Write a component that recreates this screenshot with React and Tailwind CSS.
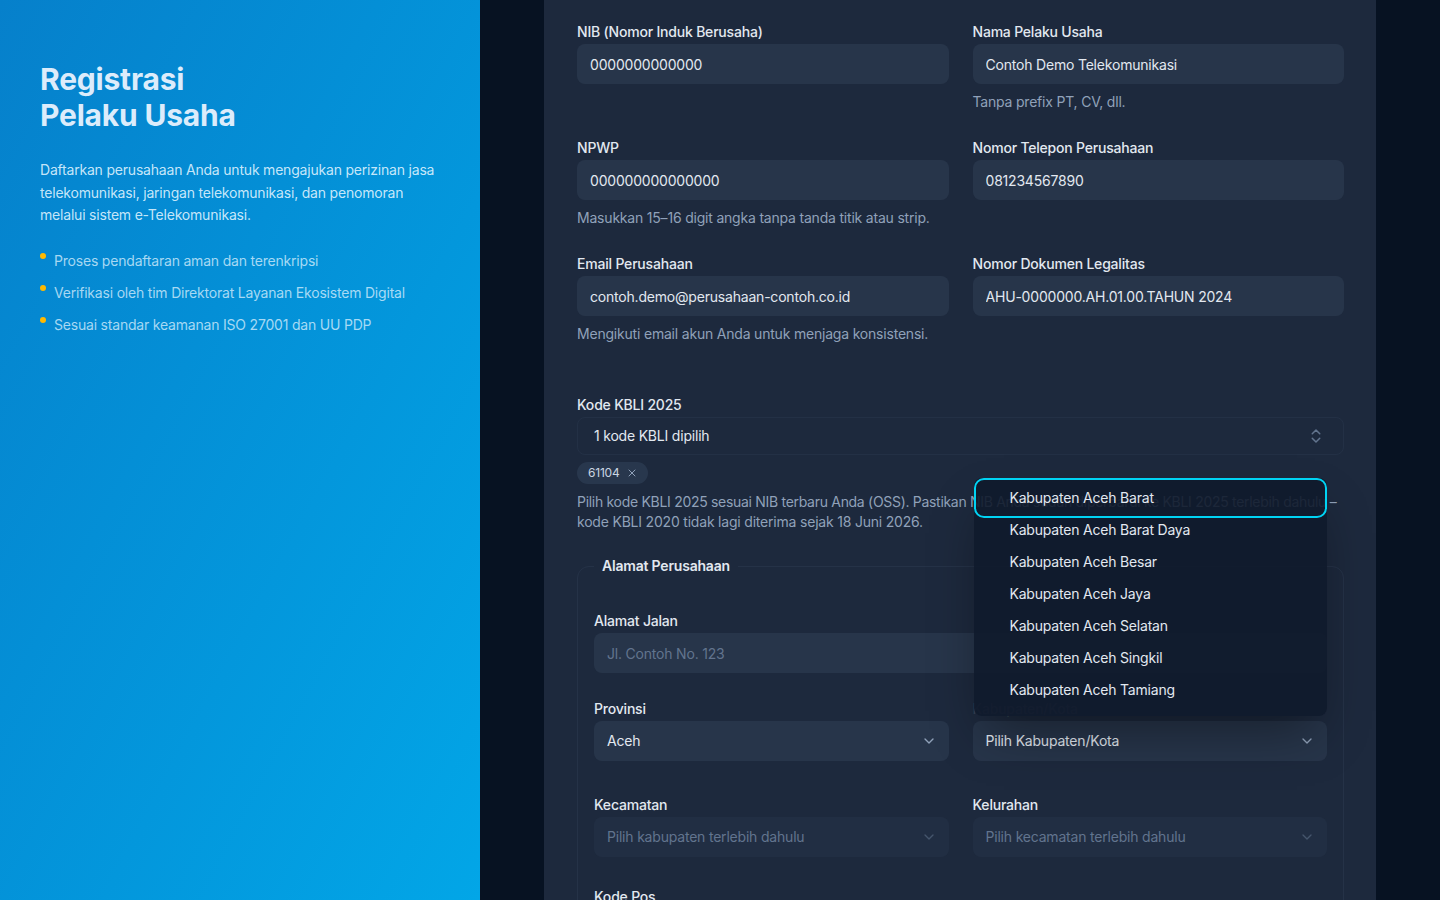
import { ChevronDown, ChevronsUpDown, X } from "lucide-react";

const KABUPATEN = [
  "Kabupaten Aceh Barat",
  "Kabupaten Aceh Barat Daya",
  "Kabupaten Aceh Besar",
  "Kabupaten Aceh Jaya",
  "Kabupaten Aceh Selatan",
  "Kabupaten Aceh Singkil",
  "Kabupaten Aceh Tamiang",
];

function Label({ children }) {
  return (
    <label className="block mb-0.5 text-sm leading-5 font-medium text-slate-200">
      {children}
    </label>
  );
}

function Help({ children }) {
  return <p className="mt-2 text-sm leading-5 text-slate-400">{children}</p>;
}

function Field({ label, value, placeholder, help }) {
  return (
    <div>
      <Label>{label}</Label>
      <input
        readOnly
        defaultValue={value}
        placeholder={placeholder}
        className="block w-full h-10 rounded-lg bg-slate-700/50 px-[13px] text-sm tracking-[-0.2px] text-slate-200 placeholder:text-slate-500 outline-none"
      />
      {help && <Help>{help}</Help>}
    </div>
  );
}

function Select({ label, value, disabled, children }) {
  return (
    <div>
      <Label>
        <span className={children ? "text-slate-200/15" : ""}>{label}</span>
      </Label>
      <div className="relative">
        {children}
        <div
          className={`flex h-10 items-center justify-between rounded-lg pl-[13px] pr-3 text-sm ${
            disabled
              ? "bg-slate-700/25 text-slate-500"
              : "bg-slate-700/50 text-slate-200"
          }`}
        >
          <span>{value}</span>
          <ChevronDown
            size={16}
            className={disabled ? "text-slate-600" : "text-slate-400"}
          />
        </div>
      </div>
    </div>
  );
}

function KabupatenList() {
  return (
    <div className="absolute left-px right-0 bottom-[calc(100%+5px)] z-10 h-[238px] overflow-hidden rounded-lg bg-[#0f1a2b]/90 pt-1 shadow-2xl shadow-black/40">
      {KABUPATEN.map((k, i) => (
        <div
          key={k}
          className={`mx-1 flex h-8 items-center rounded-md pl-8 text-sm text-slate-200 ${
            i === 0
              ? "outline-2 outline-offset-2 outline-cyan-400 rounded-lg"
              : ""
          }`}
        >
          {k}
        </div>
      ))}
    </div>
  );
}

export default function App() {
  return (
    <div className="flex h-screen overflow-hidden font-['Inter',sans-serif] tracking-[-0.2px]">
      {/* Left hero */}
      <aside className="w-[480px] shrink-0 bg-linear-to-br from-[#0680cb] to-[#02a6e7] px-10 pt-[61px]">
        <h1 className="text-3xl leading-9 font-bold text-[#dcecfb]">
          Registrasi
          <br />
          Pelaku Usaha
        </h1>
        <p className="mt-[26px] max-w-[400px] text-sm leading-[22.5px] text-sky-100/90">
          Daftarkan perusahaan Anda untuk mengajukan perizinan jasa
          telekomunikasi, jaringan telekomunikasi, dan penomoran melalui sistem
          e-Telekomunikasi.
        </p>
        <ul className="mt-6 flex flex-col gap-3">
          {[
            "Proses pendaftaran aman dan terenkripsi",
            "Verifikasi oleh tim Direktorat Layanan Ekosistem Digital",
            "Sesuai standar keamanan ISO 27001 dan UU PDP",
          ].map((t) => (
            <li key={t} className="flex items-start gap-2 text-sm leading-5 text-sky-100/75">
              <span className="mt-[2px] h-1.5 w-1.5 shrink-0 rounded-full bg-amber-400" />
              {t}
            </li>
          ))}
        </ul>
      </aside>

      {/* Form area */}
      <main className="flex-1 bg-[#071222] overflow-hidden">
        <div className="mx-auto w-[832px] min-h-full bg-slate-800 px-8 pt-[22px] pb-10">
          <div className="ml-px grid grid-cols-2 gap-x-6 gap-y-[26px]">
            <Field label="NIB (Nomor Induk Berusaha)" value="0000000000000" />
            <Field
              label="Nama Pelaku Usaha"
              value="Contoh Demo Telekomunikasi"
              help="Tanpa prefix PT, CV, dll."
            />
            <Field
              label="NPWP"
              value="000000000000000"
              help="Masukkan 15–16 digit angka tanpa tanda titik atau strip."
            />
            <Field label="Nomor Telepon Perusahaan" value="081234567890" />
            <Field
              label="Email Perusahaan"
              value="contoh.demo@perusahaan-contoh.co.id"
              help="Mengikuti email akun Anda untuk menjaga konsistensi."
            />
            <Field
              label="Nomor Dokumen Legalitas"
              value="AHU-0000000.AH.01.00.TAHUN 2024"
            />
          </div>

          {/* KBLI */}
          <div className="ml-px mt-[51px]">
            <Label>Kode KBLI 2025</Label>
            <div className="flex h-[38px] items-center justify-between rounded-lg border border-slate-700/30 pl-4 pr-[18px] text-sm text-slate-200">
              <span>1 kode KBLI dipilih</span>
              <ChevronsUpDown size={18} className="text-slate-500" />
            </div>
            <div className="mt-[7px] flex">
              <span className="flex h-[22px] items-center gap-1.5 rounded-full bg-slate-700/60 pl-[11px] pr-2.5 text-xs text-slate-300">
                61104
                <X size={12} className="text-slate-400" />
              </span>
            </div>
            <Help>
              <span className="block whitespace-nowrap tracking-[-0.3px]">
                Pilih kode KBLI 2025 sesuai NIB terbaru Anda (OSS). Pastikan
                NIB Anda sudah diperbarui ke KBLI 2025 terlebih dahulu –
              </span>
              <span className="block">
                kode KBLI 2020 tidak lagi diterima sejak 18 Juni 2026.
              </span>
            </Help>
          </div>

          {/* Alamat */}
          <fieldset className="ml-px mt-6 rounded-xl border border-slate-700/40 px-4 pt-[35px] pb-8">
            <legend className="px-2 text-sm leading-5 font-semibold text-slate-200">
              Alamat Perusahaan
            </legend>
            <Field label="Alamat Jalan" placeholder="Jl. Contoh No. 123" />
            <div className="mt-[26px] grid grid-cols-2 gap-x-6">
              <Select label="Provinsi" value="Aceh" />
              <Select label="Kabupaten/Kota" value="Pilih Kabupaten/Kota">
                <KabupatenList />
              </Select>
            </div>
            <div className="mt-[34px] grid grid-cols-2 gap-x-6">
              <Select
                label="Kecamatan"
                value="Pilih kabupaten terlebih dahulu"
                disabled
              />
              <Select
                label="Kelurahan"
                value="Pilih kecamatan terlebih dahulu"
                disabled
              />
            </div>
            <div className="mt-[30px]">
              <Field label="Kode Pos" placeholder="00000" />
            </div>
          </fieldset>
        </div>
      </main>
    </div>
  );
}
